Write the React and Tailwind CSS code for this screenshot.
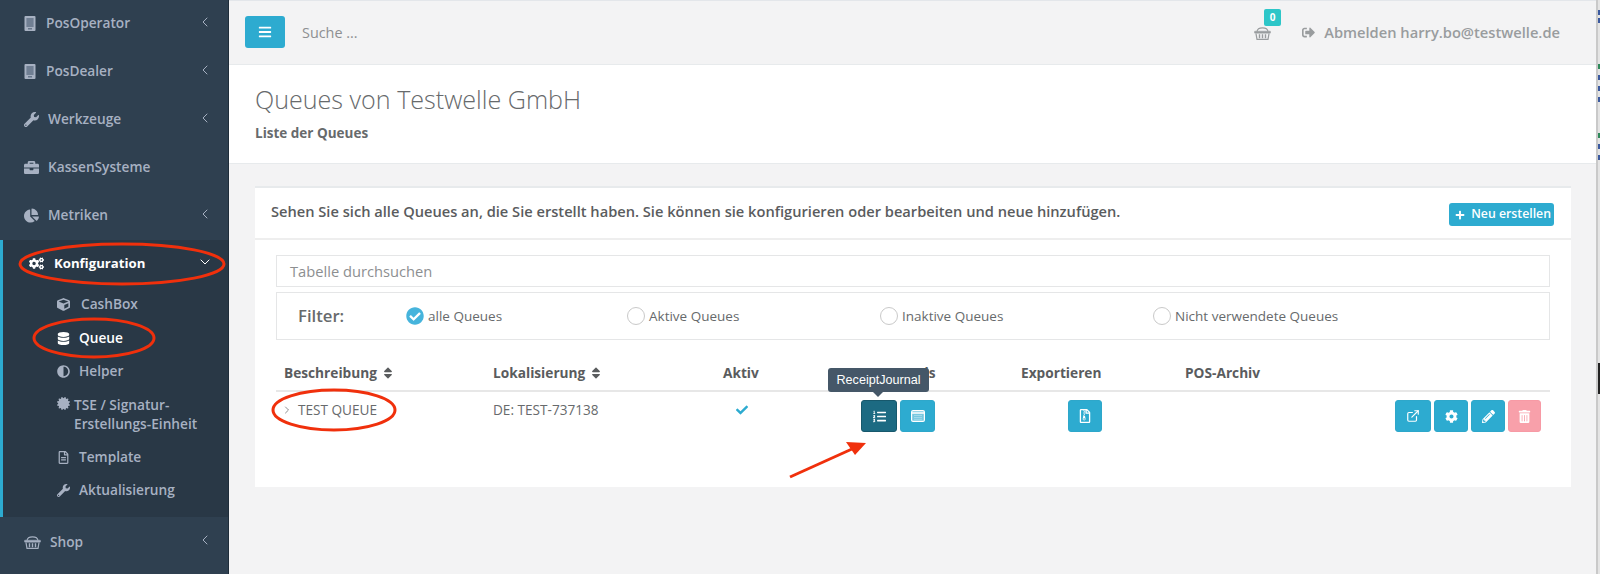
import { ChevronLeft, ChevronDown, ChevronRight, ExternalLink } from "lucide-react";
import { FaWrench, FaBriefcase, FaChartPie, FaCogs, FaCube, FaDatabase, FaAdjust, FaCertificate, FaRegFileAlt, FaBars, FaSignOutAlt, FaPlus, FaSort, FaCheck, FaCheckCircle, FaListOl, FaRegFileArchive, FaCog, FaPencilAlt, FaTrashAlt } from "react-icons/fa";

const font = "font-['Open_Sans',sans-serif]";

function PosIcon() {
  return (
    <svg width="12" height="15" viewBox="0 0 12 15">
      <rect x="0.5" width="11" height="15" rx="1" fill="#a7b1c2" />
      <rect x="2.5" y="2" width="7" height="9" fill="#66768a" />
      <path d="M4 2v9M6 2v9M8 2v9" stroke="#8493a5" strokeWidth="0.7" />
      <rect x="4" y="12" width="4" height="1.5" fill="#66768a" />
    </svg>
  );
}

function Basket({ size = 17, color = "#a7b1c2" }) {
  return (
    <svg width={size} height={size * 0.9} viewBox="0 0 17 15" fill="none" stroke={color}>
      <path d="M3 6.5C3.5 1.5 13.5 1.500 14 6.500" strokeWidth="1.1" />
      <rect x="0.5" y="6" width="16" height="2" rx="0.5" fill={color} strokeWidth="0.5" />
      <path d="M2 8.500 3 14.200H14L15 8.500" strokeWidth="1.200" />
      <path d="M5.500 9v4M8.500 9v4M11.500 9v4" strokeWidth="1.400" />
    </svg>
  );
}

function WindowIcon() {
  return (
    <svg width="14" height="12" viewBox="0 0 14 12">
      <rect x="0.6" y="0.6" width="12.800" height="10.800" rx="1.500" fill="#ffffff" fillOpacity="0.35" stroke="#ffffff" strokeWidth="1.200" />
      <path d="M1 3h12" stroke="#ffffff" strokeWidth="1.500" />
      <path d="M3 5.500h8M3 7.500h8M3 9.300h8" stroke="#ffffff" strokeOpacity="0.4" strokeWidth="0.8" />
    </svg>
  );
}

function SideItem({ icon, label, hasArrow, gap }) {
  return (
    <div className="flex h-12 items-center pb-[1px] pl-6 pr-[15px] text-[13.7px] font-semibold text-[#a7b1c2]">
      <span className="w-[22px] text-[15px]">{icon}</span>
      <span className={gap}>{label}</span>
      {hasArrow && <ChevronLeft size={16} strokeWidth={1.500} className="mb-1 ml-auto" />}
    </div>
  );
}

function SubItem({ icon, label, active }) {
  return (
    <div className={`flex h-[33.5px] items-center pl-[57px] text-[13.7px] font-semibold ${active ? "font-bold text-white" : "text-[#a7b1c2]"}`}>
      <span className="w-[22px] text-[13px]">{icon}</span>
      <span>{label}</span>
    </div>
  );
}

function Radio({ label, checked, width }) {
  return (
    <div className={`flex items-center gap-1 ${width}`}>
      {checked ? (
        <FaCheckCircle className="text-[18px] text-[#46b4dc]" />
      ) : (
        <span className="h-[18px] w-[18px] rounded-full border border-[#c9c9c9]" />
      )}
      <span>{label}</span>
    </div>
  );
}

function IconButton({ icon, w = "w-[35px]", color = "bg-[#2dabd0] border-[#2ea7ca]" }) {
  return (
    <div className={`flex h-8 items-center justify-center rounded-[3px] border text-[13px] text-white ${w} ${color}`}>
      {icon}
    </div>
  );
}

export default function App() {
  return (
    <div className={`flex h-[574px] w-[1600px] overflow-hidden bg-white text-[#676a6c] ${font}`}>
      <aside className="flex w-[229px] shrink-0 flex-col border-r border-[#1f2d3a] bg-[#2f4050]">
        <SideItem icon={<PosIcon />} label="PosOperator" hasArrow />
        <SideItem icon={<PosIcon />} label="PosDealer" hasArrow />
        <SideItem icon={<FaWrench />} label="Werkzeuge" hasArrow gap="ml-[2px]" />
        <SideItem icon={<FaBriefcase />} label="KassenSysteme" gap="ml-[2px]" />
        <SideItem icon={<FaChartPie />} label="Metriken" hasArrow gap="ml-[2px]" />
        <div className="h-[277px] border-l-[3px] border-[#2dabd0] bg-[#293846]">
          <div className="flex h-[48px] items-center pb-[1px] pl-[26px] pr-[15px] text-[13.2px] font-bold text-white">
            <span className="w-[25px] text-[15px]"><FaCogs /></span>
            <span>Konfiguration</span>
            <ChevronDown size={16} strokeWidth={1.500} className="mb-[3px] ml-auto" />
          </div>
          <div className="-ml-[3px]">
            <div className="flex h-[33.5px] items-center pl-[57px] text-[13.7px] font-semibold text-[#a7b1c2]">
              <span className="w-6 text-[13px]"><FaCube /></span>
              <span>CashBox</span>
            </div>
            <SubItem icon={<FaDatabase />} label="Queue" active />
            <SubItem icon={<FaAdjust />} label="Helper" />
            <div className="flex h-[52px] items-start pl-[57px] pt-[6px] text-[13.7px] font-semibold leading-[19px] text-[#a7b1c2]">
              <span className="w-[17px] pt-[2px] text-[13px]"><FaCertificate /></span>
              <span>TSE / Signatur-<br />Erstellungs-Einheit</span>
            </div>
            <SubItem icon={<FaRegFileAlt />} label="Template" />
            <SubItem icon={<FaWrench />} label="Aktualisierung" />
          </div>
        </div>
        <div className="flex h-12 items-center pl-6 pr-[15px] pt-[2px] text-[13.7px] font-semibold text-[#a7b1c2]">
          <span className="w-[26px]"><Basket /></span>
          <span>Shop</span>
          <ChevronLeft size={16} strokeWidth={1.500} className="mb-1 ml-auto" />
        </div>
      </aside>

      <main className="flex w-[1367px] shrink-0 flex-col border-t border-[#e3e6ea] bg-[#f3f3f4]">
        <header className="flex h-[64px] items-center border-b border-[#e7eaec] pl-4 pr-[36px]">
          <div className="mb-[2px] flex h-8 w-10 items-center justify-center rounded-[3px] bg-[#2dabd0] text-[14px] text-white">
            <FaBars />
          </div>
          <span className="ml-[17px] text-[14.400px] text-[#8d8f91]">Suche ...</span>
          <div className="relative ml-auto flex">
            <Basket color="#999c9e" />
            <span className="absolute -top-[16px] left-[10px] flex h-[17px] w-[17px] items-center justify-center rounded-[2px] bg-[#2dc6c8] text-[10px] font-bold text-white">0</span>
          </div>
          <FaSignOutAlt className="ml-[31px] text-[13px] text-[#999c9e]" />
          <span className="ml-[9px] text-[14.700px] font-semibold text-[#999c9e]">Abmelden harry.bo@testwelle.de</span>
        </header>

        <section className="h-[99px] border-b border-[#e7eaec] bg-white pl-[26px] pt-[19px]">
          <h1 className="text-[25.100px] font-light leading-[30px] text-[#676a6c]">Queues von Testwelle GmbH</h1>
          <p className="mt-[10px] text-[13.500px] font-bold leading-[18px] text-[#676a6c]">Liste der Queues</p>
        </section>

        <section className="pl-[26px] pr-[25px] pt-[22px]">
          <div className="h-[301px] border-t-2 border-[#e7eaec] bg-white">
            <div className="flex h-[52px] items-start border-b-2 border-[#eeeeee] pl-[16px] pr-[17px] pt-[13px]">
              <span className="text-[14.650px] font-semibold leading-5 text-[#5a5c5e]">Sehen Sie sich alle Queues an, die Sie erstellt haben. Sie können sie konfigurieren oder bearbeiten und neue hinzufügen.</span>
              <div className="ml-auto mt-[2px] flex h-[23px] items-center gap-[6px] rounded-[3px] bg-[#2dabd0] pl-[6px] pr-[3px] text-[12.300px] font-semibold text-white">
                <FaPlus className="text-[10px]" />
                <span>Neu erstellen</span>
              </div>
            </div>

            <div className="px-[21px] pt-[15px]">
              <div className="flex h-[32px] items-center border border-[#e5e6e7] px-[13px] text-[14.700px] text-[#8d8f91]">Tabelle durchsuchen</div>
              <div className="mt-[5px] flex h-[48px] items-center border border-[#e5e6e7] pl-[21px] text-[13.500px] text-[#676a6c]">
                <span className="w-[108px] text-[16.700px] font-semibold">Filter:</span>
                <Radio label="alle Queues" checked width="w-[221px]" />
                <Radio label="Aktive Queues" width="w-[253px]" />
                <Radio label="Inaktive Queues" width="w-[273px]" />
                <Radio label="Nicht verwendete Queues" />
              </div>

              <div className="mt-[16px] grid h-[36px] grid-cols-[217px_230px_118px_180px_164px_1fr] items-center border-b-2 border-[#e7e7e7] text-[13.700px] font-bold text-[#5a5c5e]">
                <div className="flex items-center gap-[4px] pl-2">Beschreibung <FaSort className="text-[14px]" /></div>
                <div className="flex items-center gap-[4px]">Lokalisierung <FaSort className="text-[14px]" /></div>
                <div>Aktiv</div>
                <div className="pl-[38px]">Journals</div>
                <div>Exportieren</div>
                <div>POS-Archiv</div>
              </div>

              <div className="grid h-[40px] grid-cols-[217px_230px_118px_180px_164px_1fr] items-start pt-[8px] text-[13.600px] text-[#676a6c]">
                <div className="flex items-center pl-2 leading-5"><span className="w-[14px]"><ChevronRight size={12} strokeWidth={1.500} className="-ml-[3px]" /></span><span>TEST QUEUE</span></div>
                <div className="leading-5">DE: TEST-737138</div>
                <div className="pl-[13px] pt-1 text-[12px] text-[#2dabd0]"><FaCheck /></div>
                <div className="flex gap-[3px] pl-[20px]">
                  <IconButton icon={<FaListOl />} w="w-[36px]" color="bg-[#1c6a82] border-[#17586c]" />
                  <IconButton icon={<WindowIcon />} />
                </div>
                <div className="pl-[47px]">
                  <IconButton icon={<FaRegFileArchive className="text-[14px]" />} w="w-[34px]" />
                </div>
                <div className="flex justify-end gap-[3px] pr-[9px]">
                  <IconButton icon={<ExternalLink size={14} strokeWidth={2} />} w="w-[36px]" />
                  <IconButton icon={<FaCog />} w="w-[34px]" />
                  <IconButton icon={<FaPencilAlt />} w="w-[34px]" />
                  <IconButton icon={<FaTrashAlt />} w="w-[33px]" color="bg-[#f8a0aa] border-[#f79aa5]" />
                </div>
              </div>
            </div>
          </div>
        </section>
      </main>

      {/* strip of the window behind the screenshot */}
      <div className="flex flex-1 flex-col border-l-2 border-[#c9c9c9] bg-[#e4e4e4] pt-[10px]">
        <div className="h-[5px] w-[2px] bg-[#3b5aa0]" />
        <div className="mt-[3px] h-[5px] w-[2px] bg-[#3b5aa0]" />
        <div className="mt-[41px] h-[5px] w-[2px] bg-[#2f8a5a]" />
        <div className="mt-[6px] h-[5px] w-[2px] bg-[#3b5aa0]" />
        <div className="mt-[6px] h-[5px] w-[2px] bg-[#3b5aa0]" />
        <div className="mt-[6px] h-[5px] w-[2px] bg-[#3b5aa0]" />
        <div className="mt-[31px] h-[5px] w-[2px] bg-[#2f8a5a]" />
        <div className="mt-[6px] h-[5px] w-[2px] bg-[#3b5aa0]" />
        <div className="mt-[6px] h-[5px] w-[2px] bg-[#3b5aa0]" />
        <div className="mt-[203px] h-[31px] w-full bg-[#222222]" />
      </div>

      {/* tooltip over the Journals header */}
      <div className="absolute left-[828px] top-[368px] flex h-6 w-[101px] items-center justify-center rounded-[3px] bg-[#455768] font-['Liberation_Sans',sans-serif] text-[12.600px] text-white">
        ReceiptJournal
        <span className="absolute -bottom-[5px] left-[45px] h-0 w-0 border-x-[5px] border-t-[5px] border-x-transparent border-t-[#455768]" />
      </div>

      {/* annotations drawn on the screenshot */}
      <svg className="pointer-events-none absolute left-0 top-0" width="1600" height="574" fill="none">
        <ellipse cx="122" cy="264" rx="102" ry="20" stroke="#f0300c" strokeWidth="3" />
        <ellipse cx="94" cy="338" rx="60" ry="19" stroke="#f0300c" strokeWidth="3" />
        <ellipse cx="334" cy="410" rx="61" ry="20" stroke="#f0300c" strokeWidth="3" />
        <line x1="790" y1="477" x2="852" y2="449" stroke="#f0300c" strokeWidth="3" />
        <polygon points="866,443 846,442 855,455" fill="#f0300c" />
      </svg>
    </div>
  );
}
